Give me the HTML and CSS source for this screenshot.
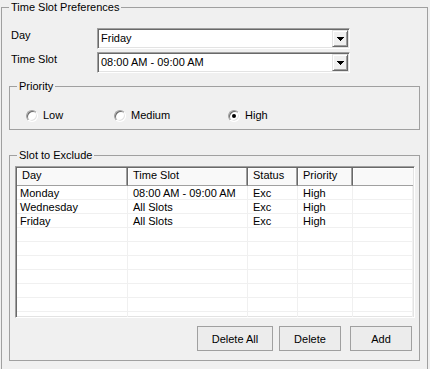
FILE: index.html
```html
<!DOCTYPE html>
<html lang="en">
<head>
    <meta charset="UTF-8">
    <meta name="viewport" content="width=device-width, initial-scale=1.0">
    <title>Time Slot Preferences</title>
    <link rel="stylesheet" href="styles.css">
</head>
<body>

<fieldset class="group group-main">
    <legend>Time Slot Preferences</legend>

    <div class="fields">
        <label class="field-label">Day</label>
        <div class="combo">
            <span class="combo-text">Friday</span>
            <span class="combo-btn"><svg width="7" height="4" viewBox="0 0 7 4" shape-rendering="crispEdges"><path d="M0 0h7v1H0zM1 1h5v1H1zM2 2h3v1H2zM3 3h1v1H3z" fill="#000"/></svg></span>
        </div>
        <label class="field-label">Time Slot</label>
        <div class="combo">
            <span class="combo-text">08:00 AM - 09:00 AM</span>
            <span class="combo-btn"><svg width="7" height="4" viewBox="0 0 7 4" shape-rendering="crispEdges"><path d="M0 0h7v1H0zM1 1h5v1H1zM2 2h3v1H2zM3 3h1v1H3z" fill="#000"/></svg></span>
        </div>
    </div>

    <fieldset class="group group-sub priority">
        <legend>Priority</legend>
        <div class="radios">
            <label class="radio radio-low"><span class="radio-circle"></span>Low</label>
            <label class="radio radio-medium"><span class="radio-circle"></span>Medium</label>
            <label class="radio"><span class="radio-circle checked"></span>High</label>
        </div>
    </fieldset>

    <fieldset class="group group-sub exclude">
        <legend>Slot to Exclude</legend>
        <div class="listview">
            <table class="slots">
                <colgroup>
                    <col class="col-day">
                    <col class="col-slot">
                    <col class="col-status">
                    <col class="col-priority">
                    <col>
                </colgroup>
                <thead>
                    <tr>
                        <th class="first">Day</th>
                        <th>Time Slot</th>
                        <th>Status</th>
                        <th>Priority</th>
                        <th class="filler"></th>
                    </tr>
                </thead>
                <tbody>
                    <tr><td class="first">Monday</td><td>08:00 AM - 09:00 AM</td><td>Exc</td><td>High</td><td></td></tr>
                    <tr><td class="first">Wednesday</td><td>All Slots</td><td>Exc</td><td>High</td><td></td></tr>
                    <tr><td class="first">Friday</td><td>All Slots</td><td>Exc</td><td>High</td><td></td></tr>
                    <tr><td class="first">&nbsp;</td><td></td><td></td><td></td><td></td></tr>
                    <tr><td class="first">&nbsp;</td><td></td><td></td><td></td><td></td></tr>
                    <tr><td class="first">&nbsp;</td><td></td><td></td><td></td><td></td></tr>
                    <tr><td class="first">&nbsp;</td><td></td><td></td><td></td><td></td></tr>
                    <tr><td class="first">&nbsp;</td><td></td><td></td><td></td><td></td></tr>
                    <tr><td class="first">&nbsp;</td><td></td><td></td><td></td><td></td></tr>
                    <tr><td class="first">&nbsp;</td><td></td><td></td><td></td><td></td></tr>
                </tbody>
            </table>
        </div>
        <div class="buttons">
            <button class="btn btn-wide">Delete All</button>
            <button class="btn">Delete</button>
            <button class="btn btn-add">Add</button>
        </div>
    </fieldset>
</fieldset>

</body>
</html>
```

FILE: styles.css
```css
body {
    margin: 0;
    height: 369px;
    overflow: hidden;
    background-color: #f0f0f0;
    font-family: "Liberation Sans", Arial, sans-serif;
    font-size: 11px;
    color: #000;
}
.group {
    margin: 0;
    padding: 0;
    min-width: 0;
    border: 1px solid #a0a0a0;
    box-sizing: border-box;
}
.group legend {
    margin-left: 7px;
    padding: 0 2px;
    line-height: 14px;
}
.group-main {
    width: 427px;
    margin-left: 1px;
    padding-bottom: 12px;
}
.group-sub {
    margin: 0 7px;
}
.fields {
    display: grid;
    grid-template-columns: 86px 253px;
    grid-auto-rows: 21px;
    row-gap: 3px;
    margin-top: 14px;
    padding-left: 9px;
}
.field-label {
    padding-top: 1px;
    line-height: 13px;
}
.combo {
    display: flex;
    box-sizing: border-box;
    height: 21px;
    padding: 1px;
    border: 1px solid;
    border-color: #a0a0a0 #fff #fff #a0a0a0;
    background-color: #fff;
    box-shadow: inset 1px 1px 0 #696969, inset -1px -1px 0 #e3e3e3;
}
.combo-text {
    flex: 1;
    padding-left: 2px;
    line-height: 17px;
}
.combo-btn {
    display: flex;
    align-items: center;
    justify-content: center;
    box-sizing: border-box;
    width: 16px;
    height: 17px;
    border: 1px solid;
    border-color: #e3e3e3 #696969 #696969 #e3e3e3;
    background-color: #f0f0f0;
    box-shadow: inset 1px 1px 0 #fff, inset -1px -1px 0 #a0a0a0;
}
.combo-btn svg {
    display: block;
    margin-top: 1px;
}
.priority {
    margin-top: 6px;
}
.radios {
    display: flex;
    align-items: center;
    padding: 16px 0 7px 16px;
}
.radio {
    display: flex;
    align-items: center;
    line-height: 13px;
}
.radio-low {
    width: 88px;
}
.radio-medium {
    width: 114px;
}
.radio-circle {
    position: relative;
    box-sizing: border-box;
    width: 12px;
    height: 12px;
    margin-right: 5px;
    border: 1px solid;
    border-color: #a0a0a0 #fff #fff #a0a0a0;
    border-radius: 50%;
    background-color: #fff;
    box-shadow: inset 1px 1px 0 #696969, inset -1px -1px 0 #e3e3e3;
}
.radio-circle.checked::after {
    content: "";
    position: absolute;
    left: 3px;
    top: 3px;
    width: 4px;
    height: 4px;
    border-radius: 50%;
    background-color: #000;
}
.exclude {
    margin-top: 18px;
    padding-bottom: 9px;
}
.listview {
    box-sizing: border-box;
    height: 152px;
    margin: 4px 4px 0 5px;
    padding: 1px;
    overflow: hidden;
    border: 1px solid;
    border-color: #a0a0a0 #fff #fff #a0a0a0;
    background-color: #fff;
    box-shadow: inset 1px 1px 0 #696969, inset -1px -1px 0 #e3e3e3;
}
.slots {
    width: 100%;
    table-layout: fixed;
    border-spacing: 0;
    font-size: 11px;
}
.col-day {
    width: 111px;
}
.col-slot {
    width: 120px;
}
.col-status {
    width: 50px;
}
.col-priority {
    width: 55px;
}
.slots th {
    padding: 1px 0 3px 5px;
    font-weight: normal;
    text-align: left;
    line-height: 13px;
    white-space: nowrap;
    background-color: #f9f9f9;
    border-right: 1px solid #696969;
    border-bottom: 1px solid #a0a0a0;
    box-shadow: inset -1px 0 0 #a0a0a0, inset 1px 1px 0 #fff;
}
.slots th.filler {
    border-right: none;
    box-shadow: inset 1px 1px 0 #fff;
}
.slots td {
    padding: 1px 0 0 5px;
    line-height: 12px;
    white-space: nowrap;
    border-right: 1px solid #f0f0f0;
    border-bottom: 1px solid #f0f0f0;
}
.slots td.first {
    padding-left: 3px;
}
.buttons {
    display: flex;
    justify-content: flex-end;
    margin: 8px 7px 0 0;
}
.btn {
    box-sizing: border-box;
    width: 62px;
    height: 25px;
    margin-left: 6px;
    padding: 0;
    border: 1px solid #a0a0a0;
    background-color: #ececec;
    font-family: "Liberation Sans", Arial, sans-serif;
    font-size: 11px;
    color: #000;
}
.btn-wide {
    width: 76px;
}
.btn-add {
    margin-left: 9px;
}
```
